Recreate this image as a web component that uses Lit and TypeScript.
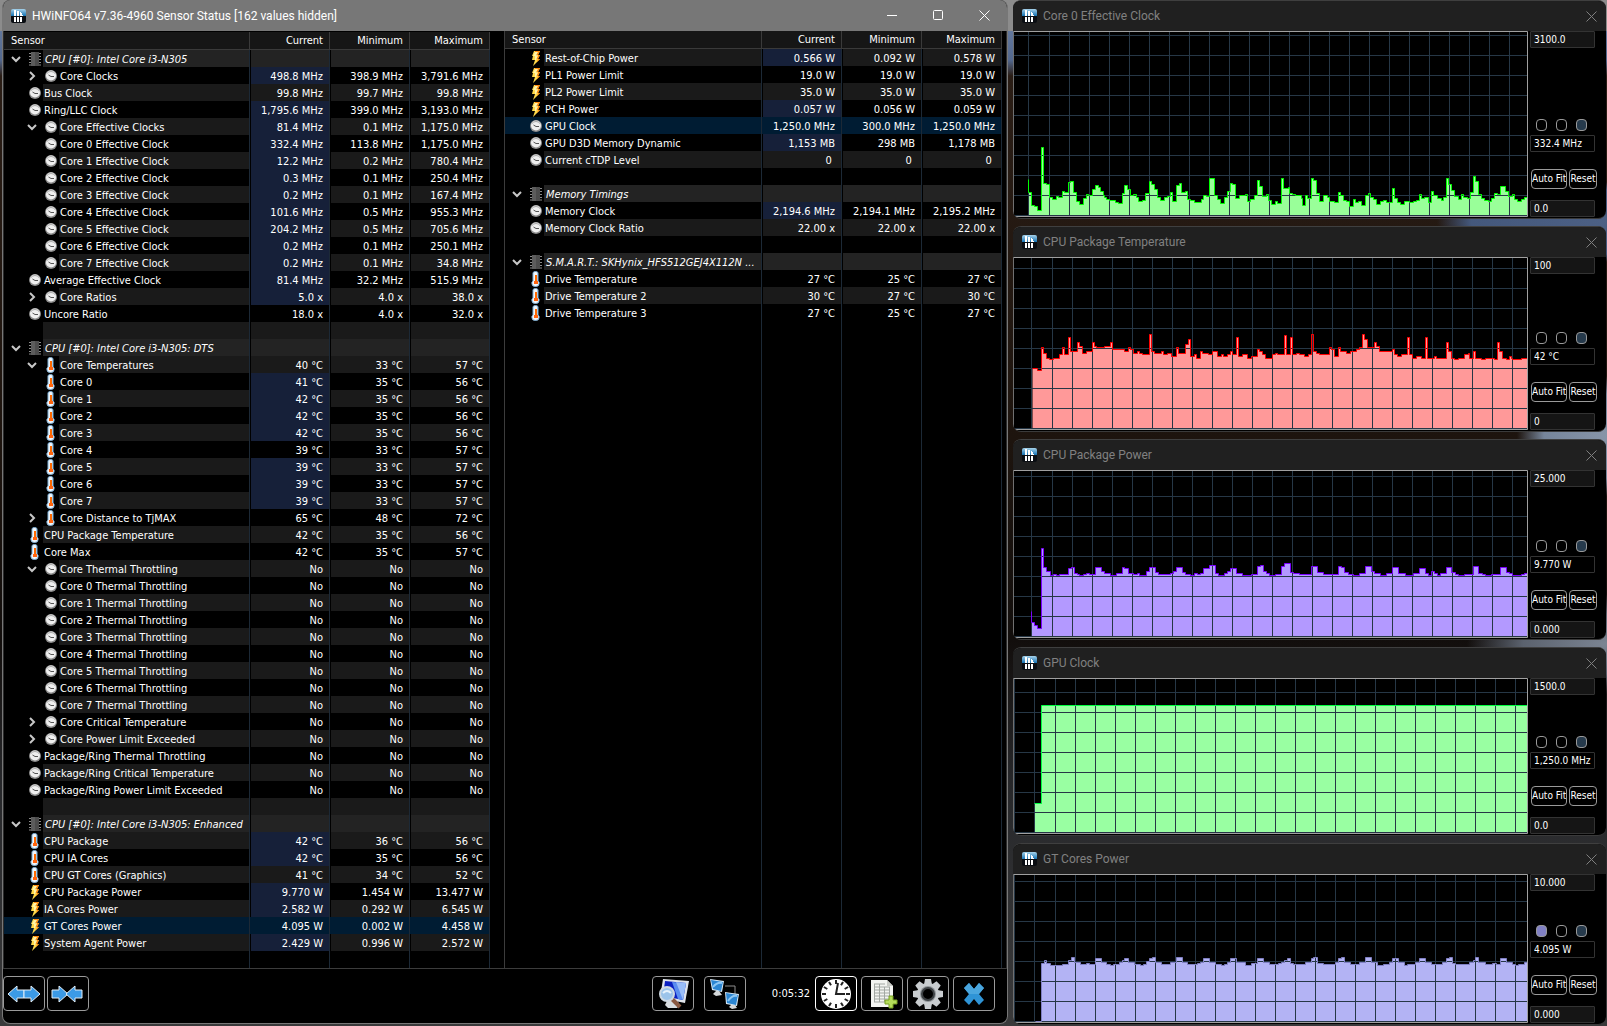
import { LitElement, html, svg, css } from 'lit';
import { customElement, property } from 'lit/decorators.js';
import { classMap } from 'lit/directives/class-map.js';

type Icon = 'chip' | 'clock' | 'temp' | 'bolt';

interface Row {
  icon?: Icon;
  name: string;
  values: string[];
  level: number;
  toggle?: 'open' | 'closed';
  group?: boolean;
  changed?: boolean;
  selected?: boolean;
}

interface Chart {
  title: string;
  max: string;
  min: string;
  value: string;
  height: number;
  top: number;
  gridStart: number[];
  fill: string;
  line: string;
  swatch: string;
  lead?: number;
  trace: string;
}

const group = (name: string): Row => ({ icon: 'chip', name, values: ['', '', ''], level: 1, toggle: 'open', group: true });
const blank = (): Row => ({ name: '', values: ['', '', ''], level: 1 });

/* flags: 2 = second level, o = expanded, c = collapsed, h = value changed, s = selected */
const row = (icon: Icon, name: string, values: string, flags = ''): Row => ({
  icon,
  name,
  values: values.split('|'),
  level: flags.includes('2') ? 2 : 1,
  toggle: flags.includes('o') ? 'open' : flags.includes('c') ? 'closed' : undefined,
  changed: flags.includes('h'),
  selected: flags.includes('s'),
});

const no = 'No|No|No';

const leftRows: Row[] = [
  group('CPU [#0]: Intel Core i3-N305'),
  row('clock', 'Core Clocks', '498.8 MHz|398.9 MHz|3,791.6 MHz', '2ch'),
  row('clock', 'Bus Clock', '99.8 MHz|99.7 MHz|99.8 MHz'),
  row('clock', 'Ring/LLC Clock', '1,795.6 MHz|399.0 MHz|3,193.0 MHz', 'h'),
  row('clock', 'Core Effective Clocks', '81.4 MHz|0.1 MHz|1,175.0 MHz', '2oh'),
  row('clock', 'Core 0 Effective Clock', '332.4 MHz|113.8 MHz|1,175.0 MHz', '2h'),
  row('clock', 'Core 1 Effective Clock', '12.2 MHz|0.2 MHz|780.4 MHz', '2h'),
  row('clock', 'Core 2 Effective Clock', '0.3 MHz|0.1 MHz|250.4 MHz', '2h'),
  row('clock', 'Core 3 Effective Clock', '0.2 MHz|0.1 MHz|167.4 MHz', '2h'),
  row('clock', 'Core 4 Effective Clock', '101.6 MHz|0.5 MHz|955.3 MHz', '2h'),
  row('clock', 'Core 5 Effective Clock', '204.2 MHz|0.5 MHz|705.6 MHz', '2h'),
  row('clock', 'Core 6 Effective Clock', '0.2 MHz|0.1 MHz|250.1 MHz', '2h'),
  row('clock', 'Core 7 Effective Clock', '0.2 MHz|0.1 MHz|34.8 MHz', '2h'),
  row('clock', 'Average Effective Clock', '81.4 MHz|32.2 MHz|515.9 MHz', 'h'),
  row('clock', 'Core Ratios', '5.0 x|4.0 x|38.0 x', '2ch'),
  row('clock', 'Uncore Ratio', '18.0 x|4.0 x|32.0 x'),
  blank(),
  group('CPU [#0]: Intel Core i3-N305: DTS'),
  row('temp', 'Core Temperatures', '40 °C|33 °C|57 °C', '2o'),
  row('temp', 'Core 0', '41 °C|35 °C|56 °C', '2h'),
  row('temp', 'Core 1', '42 °C|35 °C|56 °C', '2h'),
  row('temp', 'Core 2', '42 °C|35 °C|56 °C', '2h'),
  row('temp', 'Core 3', '42 °C|35 °C|56 °C', '2h'),
  row('temp', 'Core 4', '39 °C|33 °C|57 °C', '2'),
  row('temp', 'Core 5', '39 °C|33 °C|57 °C', '2h'),
  row('temp', 'Core 6', '39 °C|33 °C|57 °C', '2h'),
  row('temp', 'Core 7', '39 °C|33 °C|57 °C', '2h'),
  row('temp', 'Core Distance to TjMAX', '65 °C|48 °C|72 °C', '2c'),
  row('temp', 'CPU Package Temperature', '42 °C|35 °C|56 °C'),
  row('temp', 'Core Max', '42 °C|35 °C|57 °C'),
  row('clock', 'Core Thermal Throttling', no, '2o'),
  ...[0, 1, 2, 3, 4, 5, 6, 7].map((n) => row('clock', `Core ${n} Thermal Throttling`, no, '2')),
  row('clock', 'Core Critical Temperature', no, '2c'),
  row('clock', 'Core Power Limit Exceeded', no, '2c'),
  row('clock', 'Package/Ring Thermal Throttling', no),
  row('clock', 'Package/Ring Critical Temperature', no),
  row('clock', 'Package/Ring Power Limit Exceeded', no),
  blank(),
  group('CPU [#0]: Intel Core i3-N305: Enhanced'),
  row('temp', 'CPU Package', '42 °C|36 °C|56 °C', 'h'),
  row('temp', 'CPU IA Cores', '42 °C|35 °C|56 °C', 'h'),
  row('temp', 'CPU GT Cores (Graphics)', '41 °C|34 °C|52 °C'),
  row('bolt', 'CPU Package Power', '9.770 W|1.454 W|13.477 W', 'h'),
  row('bolt', 'IA Cores Power', '2.582 W|0.292 W|6.545 W', 'h'),
  row('bolt', 'GT Cores Power', '4.095 W|0.002 W|4.458 W', 's'),
  row('bolt', 'System Agent Power', '2.429 W|0.996 W|2.572 W', 'h'),
];

const rightRows: Row[] = [
  row('bolt', 'Rest-of-Chip Power', '0.566 W|0.092 W|0.578 W', 'h'),
  row('bolt', 'PL1 Power Limit', '19.0 W|19.0 W|19.0 W'),
  row('bolt', 'PL2 Power Limit', '35.0 W|35.0 W|35.0 W'),
  row('bolt', 'PCH Power', '0.057 W|0.056 W|0.059 W', 'h'),
  row('clock', 'GPU Clock', '1,250.0 MHz|300.0 MHz|1,250.0 MHz', 's'),
  row('clock', 'GPU D3D Memory Dynamic', '1,153 MB|298 MB|1,178 MB', 'h'),
  row('clock', 'Current cTDP Level', '0\u00a0|0\u00a0|0\u00a0'),
  blank(),
  group('Memory Timings'),
  row('clock', 'Memory Clock', '2,194.6 MHz|2,194.1 MHz|2,195.2 MHz', 'h'),
  row('clock', 'Memory Clock Ratio', '22.00 x|22.00 x|22.00 x'),
  blank(),
  group('S.M.A.R.T.: SKHynix_HFS512GEJ4X112N ...'),
  row('temp', 'Drive Temperature', '27 °C|25 °C|27 °C'),
  row('temp', 'Drive Temperature 2', '30 °C|27 °C|30 °C'),
  row('temp', 'Drive Temperature 3', '27 °C|25 °C|27 °C'),
];

/* Traces are "x:y" steps in thirds of a pixel; y counts down and is relative to `top`. */
const charts: Chart[] = [
  {
    title: 'Core 0 Effective Clock', max: '3100.0', min: '0.0', value: '332.4 MHz',
    height: 186, top: -327, gridStart: [46, 109], fill: '#99ff99', line: '#00ff00', swatch: 'transparent', lead: 118,
    trace: `46:157 55:196 64:199 73:211 85:22 92:131 100:134 109:172 118:178 130:169 136:172 148:154 154:157 166:128 172:125
      182:157 190:184 199:193 210:175 220:163 226:166 238:148 247:136 256:142 262:154 270:166 274:172 280:178 290:181 308:187
      316:190 328:160 334:136 343:148 352:166 361:163 370:172 376:184 388:181 397:160 409:125 415:134 424:148 433:172 442:181
      454:172 463:169 472:157 478:184 490:136 499:130 505:157 517:154 523:178 532:181 544:187 564:178 571:166 580:169 589:115
      604:166 613:178 622:190 634:172 643:154 652:130 657:133 667:175 679:166 697:163 703:184 712:178 724:166 733:121 739:139
      748:169 760:163 766:181 775:193 787:184 793:190 804:115 811:145 826:142 829:160 838:163 847:166 865:175 868:196 877:166
      883:175 895:115 900:121 910:160 919:184 931:166 943:172 949:184 964:187 976:157 982:166 991:181 1000:184 1009:199
      1021:178 1027:187 1036:184 1045:196 1057:166 1066:160 1072:172 1081:178 1090:193 1102:184 1111:181 1120:187 1138:145
      1144:175 1153:187 1162:193 1174:184 1190:187 1200:184 1210:181 1218:163 1226:175 1234:172 1246:187 1255:154 1261:166
      1273:175 1285:181 1291:172 1300:115 1306:133 1315:151 1324:169 1336:178 1345:163 1351:172 1363:175 1372:157 1381:109
      1387:125 1397:163 1405:175 1414:181 1426:184 1435:175 1444:160 1453:163 1462:138 1477:154 1486:169 1498:163 1504:178
      1513:184 1525:178 1534:172`,
  },
  {
    title: 'CPU Package Temperature', max: '100', min: '0', value: '42 °C',
    height: 173, top: 351, gridStart: [55, 118], fill: '#ff9999', line: '#ff0000', swatch: 'transparent',
    trace: `57:685 73:691 85:622 92:640 100:655 109:658 121:655 139:643 148:622 154:643 166:592 172:634 193:607 199:619 208:640
      220:634 238:607 245:619 250:622 274:619 292:607 298:628 334:634 346:622 352:628 361:640 373:634 380:640 388:643 409:583
      415:634 424:640 445:634 451:643 463:640 475:649 490:622 496:640 517:613 526:598 532:649 544:643 550:655 562:634 568:640
      586:643 598:634 613:649 625:643 631:649 643:643 652:634 658:643 670:592 676:649 688:643 703:655 716:649 733:628 739:634
      748:643 757:655 778:643 787:640 794:643 814:586 820:643 832:592 838:643 850:640 859:643 875:649 886:643 895:583 901:634
      910:640 919:643 949:622 955:628 964:649 976:622 982:634 1000:640 1012:634 1030:628 1039:622 1048:583 1054:598 1063:622
      1084:607 1090:619 1099:634 1138:628 1144:643 1153:649 1165:643 1183:592 1189:643 1198:655 1210:649 1226:655 1237:592
      1243:655 1264:649 1270:655 1300:607 1306:634 1315:655 1324:658 1336:655 1354:643 1366:640 1369:655 1381:634 1387:655
      1405:658 1417:655 1444:658 1453:607 1459:634 1468:655 1480:658 1489:649 1495:655 1498:658 1525:655`,
  },
  {
    title: 'CPU Package Power', max: '25.000', min: '0.000', value: '9.770 W',
    height: 168, top: 120, gridStart: [55, 118], fill: '#b399ff', line: '#7a00ff', swatch: 'transparent', lead: 545,
    trace: `55:577 64:587 73:596 85:355 92:413 101:425 111:437 120:433 129:437 138:433 166:416 174:413 183:430 193:433 198:437
      211:433 220:430 228:433 247:413 264:425 273:430 292:437 310:430 327:413 335:416 345:430 360:433 374:430 380:437 399:425
      409:412 426:427 436:433 471:430 480:425 490:412 507:427 516:432 532:437 544:430 553:434 561:430 570:416 589:406 606:430
      615:437 633:430 644:425 651:416 669:430 687:437 714:432 732:410 741:406 750:425 759:430 768:437 786:433 805:410 813:400
      831:427 840:430 858:433 896:410 912:428 931:433 975:409 985:413 993:428 1005:433 1020:437 1038:431 1056:409 1074:425
      1083:430 1101:437 1119:431 1137:413 1155:430 1176:437 1200:430 1218:416 1236:431 1245:437 1256:425 1263:431 1272:437
      1281:430 1299:412 1316:427 1326:433 1337:437 1354:433 1380:409 1397:430 1408:433 1417:437 1434:433 1462:412 1480:428
      1488:431 1498:437 1525:433 1533:430`,
  },
  {
    title: 'GPU Clock', max: '1500.0', min: '0.0', value: '1,250.0 MHz',
    height: 156, top: 114, gridStart: [5, 64, 127], fill: '#99ffa2', line: '#00ff40', swatch: 'transparent',
    trace: '64:490 85:196',
  },
  {
    title: 'GT Cores Power', max: '10.000', min: '0.000', value: '4.095 W',
    height: 149, top: 102, gridStart: [5, 64, 127], fill: '#b3b3f4', line: '#8080c4', swatch: '#8080c4',
    trace: `66:544 85:370 93:360 101:370 111:376 148:373 166:361 174:353 183:367 202:373 220:370 229:373 247:355 264:366 280:372
      292:376 301:372 318:366 327:361 335:356 345:367 363:373 381:376 390:372 399:364 408:356 417:353 426:367 445:373 471:368
      489:353 507:367 523:373 552:370 561:366 570:355 589:367 606:373 624:376 634:372 642:366 651:355 669:367 696:376 714:370
      732:355 750:367 768:373 795:370 804:366 813:361 822:356 831:370 840:373 876:366 894:356 902:353 912:370 931:373 967:367
      976:356 984:353 993:367 1012:373 1038:366 1056:353 1074:366 1092:376 1110:373 1128:366 1137:355 1155:367 1174:376
      1182:373 1208:366 1218:356 1236:366 1254:373 1289:366 1299:356 1308:353 1317:370 1326:373 1370:366 1380:361 1388:353
      1397:367 1416:373 1439:370 1450:373 1462:355 1479:366 1498:373 1507:376 1516:372 1533:367`,
  },
];

const logo = html`<svg class="logo" width="15" height="16" viewBox="0 0 15 16" aria-hidden="true">
  <defs>
    <linearGradient id="sky" x1="0" y1="0" x2="0" y2="1"><stop offset="0" stop-color="#a6d2ea" /><stop offset="1" stop-color="#1673b4" /></linearGradient>
  </defs>
  <path d="M2 1h11a2 2 0 0 1 2 2v5H0V3a2 2 0 0 1 2-2z" fill="url(#sky)" />
  <path d="M0 8h15v5a2 2 0 0 1-2 2H2a2 2 0 0 1-2-2z" fill="#0a0d12" />
  <path d="M3 2h2v6H3zM6 3h2v5H6zM9 4h1v1H9zM9 5h2v3H9zM11 7h1v1h-1z" fill="#fff" />
  <path d="M3 9h2v5H3zM6 9h2v5H6zM9 9h2v5H9z" fill="#fff" />
</svg>`;

const icons: Record<Icon, unknown> = {
  chip: svg`<path d="M2 2.5h12M2 5.5h12M2 8.5h12M2 11.5h12M2 14h12" stroke="#8a8a8a" />
    <rect x="4" y="1" width="8" height="14" fill="#4c4c4c" /><path d="M4 1h4v14H4z" fill="#5c5c5c" />`,
  clock: svg`<circle cx="8" cy="8" r="6" fill="#8c8c8c" /><circle cx="8" cy="7.500" r="5" fill="#efefef" />
    <path d="M4 5.500a5 5 0 0 1 8 0" stroke="#a8a8a8" fill="none" /><path d="M5.500 7L8 8.500h3" stroke="#555" fill="none" />`,
  temp: svg`<path d="M5 2q0-1.500 2.500-1.500T10 2v8a4 3 0 0 1 1 3q0 2.500-3.500 2.500T4 13a4 3 0 0 1 1-3z" fill="#f1f6fa" stroke="#7fb0d6" />
    <path d="M7 4h2v7H7z" fill="#ff6a00" /><path d="M6 10h4v3H6z" fill="#ff6410" /><path d="M9.500 2v8" stroke="#9cc4e4" />`,
  bolt: svg`<path d="M6 1h6l-2 4h2L10 9h2L5 16l2-6H4l1-4H4z" fill="#ffd94a" /><path d="M7 1h5l-2 4h2l-2 4h2l-3 3 1-3H8l2-4H7z" fill="#ff8a10" />
    <path d="M7 2h3L8 5.500h2L8 10H7V6H5z" fill="#fff5a8" />`,
};

const chevron = (open: boolean) => svg`<path d=${open ? 'M4 6L8 10L12 6' : 'M6 4L10 8L6 12'} fill="none" stroke="#c8c8c8" stroke-width="2" />`;

@customElement('sensor-pane')
export class SensorPane extends LitElement {
  @property({ attribute: false }) rows: Row[] = [];

  static styles = css`
    :host { display: flex; flex-direction: column; min-width: 0; font: 11px/15px 'DejaVu Sans Condensed', 'Liberation Sans', sans-serif; color: #fff; }
    table { width: 100%; table-layout: fixed; border-collapse: separate; border-spacing: 0; }
    .value-col { width: 80px; }
    th, td { padding: 0; height: 17px; border: 0 solid #000; white-space: nowrap; overflow: hidden; font-weight: 400; text-align: right; box-sizing: border-box; }
    thead th { height: 18px; background: #161616; border-right: 1px solid #3a3a3a; border-bottom: 1px solid #3a3a3a; padding-right: 6px; }
    thead th:first-child { text-align: left; padding-left: 7px; }
    tbody td { border-left: 1px solid #000; border-right: 1px solid #1c2936; padding: 2px 6px 0 0; }
    tbody th { border-right: 1px solid #1c2936; }
    .line { display: flex; height: 17px; }
    .tree { display: flex; align-items: center; flex: none; gap: 3px; padding-left: 4px; background: #000; }
    .deep .tree { padding-left: 20px; }
    .tree svg { display: block; width: 16px; height: 16px; flex: none; }
    .spacer { width: 16px; flex: none; }
    .toggle { width: 16px; height: 16px; padding: 0; border: 0; background: none; flex: none; }
    .label { flex: 1; text-align: left; padding: 2px 0 0 1px; min-width: 0; }
    .stripe .label, .stripe td { background: #1a1a1a; }
    .group .label, .group td { background: #232323; }
    .group .label { font-style: italic; padding-left: 2px; }
    .changed td:nth-child(2) { background: #162039; }
    .selected .tree, .selected .label, .selected td { background: #001c33; }
    .selected td { border-left-color: #001c33; }
    .rest { flex: 1; display: grid; grid-template-columns: 1fr repeat(3, 80px); }
    .rest span { border-right: 1px solid #1c2936; }
  `;

  render() {
    return html`<table>
        <colgroup><col /><col class="value-col" /><col class="value-col" /><col class="value-col" /></colgroup>
        <thead><tr><th scope="col">Sensor</th><th scope="col">Current</th><th scope="col">Minimum</th><th scope="col">Maximum</th></tr></thead>
        <tbody>${this.rows.map((r, i) => this.renderRow(r, i))}</tbody>
      </table>
      <div class="rest"><span></span><span></span><span></span><span></span></div>`;
  }

  private renderRow(r: Row, i: number) {
    const cls = { stripe: i % 2 === 0, deep: r.level === 2, group: !!r.group, changed: !!r.changed, selected: !!r.selected };
    return html`<tr class=${classMap(cls)}>
      <th scope="row"><div class="line">
        <span class="tree">
          ${r.toggle
            ? html`<button class="toggle" aria-label=${r.toggle === 'open' ? 'Collapse' : 'Expand'}><svg viewBox="0 0 16 16">${chevron(r.toggle === 'open')}</svg></button>`
            : html`<span class="spacer"></span>`}
          ${r.icon ? html`<svg viewBox="0 0 16 16" aria-hidden="true">${icons[r.icon]}</svg>` : html`<span class="spacer"></span>`}
        </span>
        <span class="label">${r.name}</span>
      </div></th>
      ${r.values.map((v) => html`<td>${v}</td>`)}
    </tr>`;
  }
}

@customElement('graph-window')
export class GraphWindow extends LitElement {
  @property({ attribute: false }) chart!: Chart;

  static styles = css`
    :host { display: flex; flex-direction: column; min-width: 0; min-height: 0; overflow: hidden; box-sizing: border-box; border-radius: 8px;
      border-top: 1px solid #3f3f3f; border-bottom: 1px solid #3a3a3a; background: #000; color: #fff; }
    header { display: flex; align-items: center; flex: none; height: 30px; padding-left: 9px; gap: 6px; background: #202020; }
    h2 { flex: 1; margin: 0; font: 12px/16px Roboto, 'Liberation Sans', sans-serif; color: #808080; }
    .logo { display: block; }
    .close { width: 30px; height: 30px; padding: 0; border: 0; background: none; display: grid; place-items: center; }
    .body { display: flex; flex: 1; min-height: 0; padding-bottom: 1px; }
    .plot { flex: 1; display: block; min-width: 0; height: 100%; }
    .side { width: 78px; flex: none; box-sizing: border-box; padding: 0 10px 0 2px; display: flex; flex-direction: column;
      font: 10px/15px 'DejaVu Sans Condensed', 'Liberation Sans', sans-serif; }
    input { width: 65px; height: 17px; flex: none; box-sizing: border-box; padding: 0 3px; border: 1px solid #333; border-radius: 1px; background: #151515; color: #fff; font: inherit; }
    input[readonly] { background: #000; }
    .swatches { display: flex; gap: 9px; margin: auto 0 4px; padding-left: 6px; }
    .swatch { width: 11px; height: 12px; box-sizing: border-box; padding: 0; border: 1px solid #999; border-radius: 4px; background: #000; }
    .back { background: #263a4c; }
    .buttons { display: flex; gap: 2px; margin: 17px 0 11px; padding-left: 1px; }
    .buttons button { height: 20px; flex: none; box-sizing: border-box; padding: 0; border: 1px solid #9a9a9a; border-radius: 4px; background: #000; color: #fff; font: inherit; line-height: 18px; white-space: nowrap; overflow: hidden; }
    .fit { width: 36px; }
    .reset { width: 28px; }
  `;

  private renderPlot(c: Chart) {
    const h = c.height * 3;
    const snap = (v: number) => Math.floor(v / 3) * 3 + 1.5;
    const steps = c.trace.trim().split(/\s+/).map((s) => s.split(':').map(Number));
    const startX = snap(steps[0][0]);
    const path = steps.map(([x, y]) => `H${snap(x)}V${snap(y - c.top)}`).join('') + 'H1542';
    const outline = `M${startX} ${snap((c.lead ?? steps[0][1]) - c.top)}${path}`;
    const area = `M${startX} ${h - 3}${path}V${h - 3}Z`;
    const start = c.gridStart[c.gridStart.length - 1];
    const xs = c.gridStart.slice(0, -1);
    for (let x = start; x < 1540; x += 60) xs.push(x);
    const ys: number[] = [];
    for (let y = h - 4.5; y > 3; y -= 60) ys.push(y);
    const grid = xs.map((x) => `M${snap(x)} 3V${h - 3}`).join('') + ys.map((y) => `M3 ${y}H1542`).join('');
    return html`<svg class="plot" viewBox="0 0 1545 ${h}" preserveAspectRatio="none" role="img" aria-label=${c.title}>
      <path d=${area} fill=${c.fill} />
      <path d=${grid} fill="none" stroke="#263746" stroke-width="3" />
      <path d=${outline} fill="none" stroke=${c.line} stroke-width="3" />
      <path d="M0 1.500H1543.500V${h - 1.5}H0" fill="none" stroke="#a0a0a0" stroke-width="3" />
      <path d="M1.500 0V${h}" stroke="#707070" stroke-width="3" />
    </svg>`;
  }

  render() {
    const c = this.chart;
    return html`<header>${logo}<h2>${c.title}</h2>
        <button class="close" aria-label="Close"><svg width="11" height="11" viewBox="0 0 11 11"><path d="M.5.5l10 10M10.500.5l-10 10" stroke="#808080" fill="none" /></svg></button>
      </header>
      <div class="body">
        ${this.renderPlot(c)}
        <div class="side">
          <input aria-label="Maximum" .value=${c.max} />
          <div class="swatches">
            <button class="swatch" aria-label="Line colour" style="background:${c.swatch}"></button>
            <button class="swatch" aria-label="Background colour"></button>
            <button class="swatch back" aria-label="Grid colour"></button>
          </div>
          <input aria-label="Current value" readonly .value=${c.value} />
          <div class="buttons"><button class="fit">Auto Fit</button><button class="reset">Reset</button></div>
          <input aria-label="Minimum" .value=${c.min} />
        </div>
      </div>`;
  }
}

const arrowLeft = 'M2 9L11 1V5H18V13H11V17Z';
const arrowRight = 'M18 9L9 1V5H2V13H9V17Z';

const toolIcons = {
  expand: svg`<g fill="#3b9ae6" stroke="#e4eef6"><path d=${arrowLeft} transform="translate(0 7)" /><path d=${arrowRight} transform="translate(16 7)" /></g>`,
  shrink: svg`<g fill="#3b9ae6" stroke="#e4eef6"><path d=${arrowRight} transform="translate(0 7)" /><path d=${arrowLeft} transform="translate(14 7)" /></g>`,
  search: svg`<path d="M10 27l3-6h8l4 6-3 3h-9z" fill="#d9dde0" /><path d="M8 1l26 2-4 22L5 20z" fill="#dfe3ea" /><path d="M10 3l21 2-3 17L8 18z" fill="#0b1fc0" /><path d="M17 4l14 1-3 17-5-1z" fill="#5b8df0" /><path d="M21 4l10 1-3 17z" fill="#b4d2fb" opacity=".7" />
    <path d="M17 21l8 8" stroke="#8b5a42" stroke-width="4" /><circle cx="12" cy="16" r="7" fill="#9cc4ea" stroke="#cfd9e2" stroke-width="2" /><path d="M8 15q4-4 8 0" stroke="#e6f2fc" fill="none" stroke-width="2" />`,
  network: svg`<path d="M18 8h10v9" fill="none" stroke="#8d8d8d" />
    <path d="M3 1l14 2-2 11L5 12z" fill="#d6e8f6" /><path d="M4 2l12 2-2 9L6 11z" fill="#2b86d3" /><path d="M6 9q4-5 9-4" stroke="#8cc7f5" stroke-width="2" fill="none" /><path d="M9 13h3l3 4-6 1-3-2z" fill="#d5d8da" />
    <path d="M18 14l14 2-2 12-11-2z" fill="#d6e8f6" /><path d="M19 15l12 2-2 10-9-2z" fill="#2b86d3" /><path d="M21 23q4-6 9-5" stroke="#8cc7f5" stroke-width="2" fill="none" /><path d="M24 27h4l2 3-5 1-3-2z" fill="#d5d8da" />`,
  clock: svg`<circle cx="18" cy="16" r="15" fill="#fff" /><g stroke="#222" stroke-width="2">${[0, 30, 60, 90, 120, 150, 180, 210, 240, 270, 300, 330].map((a) => svg`<path d="M18 2v4" transform="rotate(${a} 18 16)" />`)}</g><path d="M20 5L18 16H27" fill="none" stroke="#222" stroke-width="2" />`,
  report: svg`<path d="M7 2h16l6 6v21H7z" fill="#f3f4f1" /><path d="M23 2v6h6z" fill="#c8cac5" /><path d="M10 6h11M10 9h16M10 12h16M10 15h16M10 18h16M10 21h16M10 24h12M10.500 6v18M15.500 6v18M20.500 9v15M25.500 9v12" stroke="#a3a8a3" fill="none" /><path d="M25 18h4v4h4v4h-4v4h-4v-4h-4v-4h4z" fill="#b4dc5a" stroke="#76a020" />`,
  gear: svg`<g fill="#c9cdd0">${[0, 45, 90, 135, 180, 225, 270, 315].map((a) => svg`<path d="M15 1h6l1 6h-8z" transform="rotate(${a} 18 16)" />`)}<circle cx="18" cy="16" r="11" /></g><circle cx="18" cy="16" r="8" fill="#8f9498" /><circle cx="18" cy="16" r="6" fill="#000" stroke="#3c4043" stroke-width="2" />`,
  exit: svg`<path d="M8 10l5-5 5 6 5-6 5 5-5 6 5 6-5 5-5-6-5 6-5-5 5-6z" fill="#2f94d6" /><path d="M8 10l5-5 5 6 5-6 5 5-5 6H13z" fill="#4aa6de" />`,
};

@customElement('app-root')
export class AppRoot extends LitElement {
  static styles = css`
    :host {
      display: grid; grid-template-columns: 1006fr 593fr; gap: 5px; min-height: 100vh; box-sizing: border-box; padding: 0 1px 0 2px;
      background:
        radial-gradient(ellipse 170px 40px at 100% 222px, #4c6084, #44587c 80%, transparent),
        radial-gradient(ellipse 90px 60px at 100% 436px, #8795a8, #76859a 70%, transparent),
        radial-gradient(ellipse 140px 50px at 100% 644px, #7c8593, #5b626e 60%, transparent),
        linear-gradient(#8c8c8c 0, #8c8c8c 31px, #62779c 31px, #53688e 60px, #2a1d15 76px, #1d140e 440px, #120e0c 640px, #26272a 780px, #3a3a3b 1026px);
    }
    .window { display: flex; flex-direction: column; min-width: 0; margin-bottom: 2px; box-sizing: border-box; overflow: hidden;
      border: 1px solid #777; border-top: 0; border-radius: 8px; background: #000; color: #fff; }
    .title { display: flex; align-items: center; flex: none; height: 31px; padding-left: 8px; gap: 6px; background: #777; }
    h1 { flex: 1; margin: 0; font: 12px/16px Roboto, 'Liberation Sans', sans-serif; }
    .captions { display: flex; }
    .caption { width: 46px; height: 31px; padding: 0; border: 0; background: none; display: grid; place-items: center; }
    .logo { display: block; }
    .panes { flex: 1; display: grid; grid-template-columns: 500fr 502fr; min-height: 0; border-left: 1px solid #2c2c2c; border-right: 1px solid #2c2c2c; border-bottom: 1px solid #3c3c3c; }
    .left { padding: 1px 14px 0 0; }
    .right { padding: 0 4px 0 0; border-left: 1px solid #3c3c3c; }
    .toolbar { display: flex; align-items: center; flex: none; height: 54px; box-sizing: border-box; padding: 0 12px 5px 0; gap: 2px; font: 11px/17px 'DejaVu Sans Condensed', sans-serif; }
    .tool { width: 42px; height: 35px; box-sizing: border-box; padding: 0; border: 1px solid #9a9a9a; border-radius: 4px; background: #000; display: grid; place-items: center; }
    .tool svg { display: block; }
    .active { border-color: #fff; }
    .space { flex: 1; }
    .views { display: flex; gap: 10px; padding-right: 24px; }
    .actions { display: flex; gap: 4px; padding-left: 3px; }
    .graphs { display: grid; grid-template-rows: 219fr 206fr 201fr 189fr 182fr; gap: 7px; padding-bottom: 1px; min-height: 0; }
  `;

  private tool(name: string, icon: unknown, active = false) {
    return html`<button class=${classMap({ tool: true, active })} aria-label=${name}><svg width="36" height="32" viewBox="0 0 36 32">${icon}</svg></button>`;
  }

  render() {
    return html`<section class="window">
        <div class="title">${logo}<h1>HWiNFO64 v7.36-4960 Sensor Status [162 values hidden]</h1>
          <div class="captions">
            <button class="caption" aria-label="Minimize"><svg width="11" height="11"><path d="M0 5.500h10" stroke="#fff" /></svg></button>
            <button class="caption" aria-label="Maximize"><svg width="11" height="11"><rect x=".5" y=".5" width="9" height="9" rx="1" fill="none" stroke="#fff" /></svg></button>
            <button class="caption" aria-label="Close"><svg width="11" height="11"><path d="M.5.5l10 10M10.500.5l-10 10" stroke="#fff" /></svg></button>
          </div>
        </div>
        <div class="panes">
          <sensor-pane class="left" .rows=${leftRows}></sensor-pane>
          <sensor-pane class="right" .rows=${rightRows}></sensor-pane>
        </div>
        <div class="toolbar">
          ${this.tool('Expand columns', toolIcons.expand)}${this.tool('Shrink columns', toolIcons.shrink)}
          <span class="space"></span>
          <div class="views">${this.tool('System summary', toolIcons.search)}${this.tool('Remote sensors', toolIcons.network)}</div>
          <span>0:05:32</span>
          <div class="actions">
            ${this.tool('Reset timer', toolIcons.clock, true)}${this.tool('Log to file', toolIcons.report)}${this.tool('Settings', toolIcons.gear)}${this.tool('Exit', toolIcons.exit)}
          </div>
        </div>
      </section>
      <div class="graphs">${charts.map((c) => html`<graph-window .chart=${c}></graph-window>`)}</div>`;
  }
}
